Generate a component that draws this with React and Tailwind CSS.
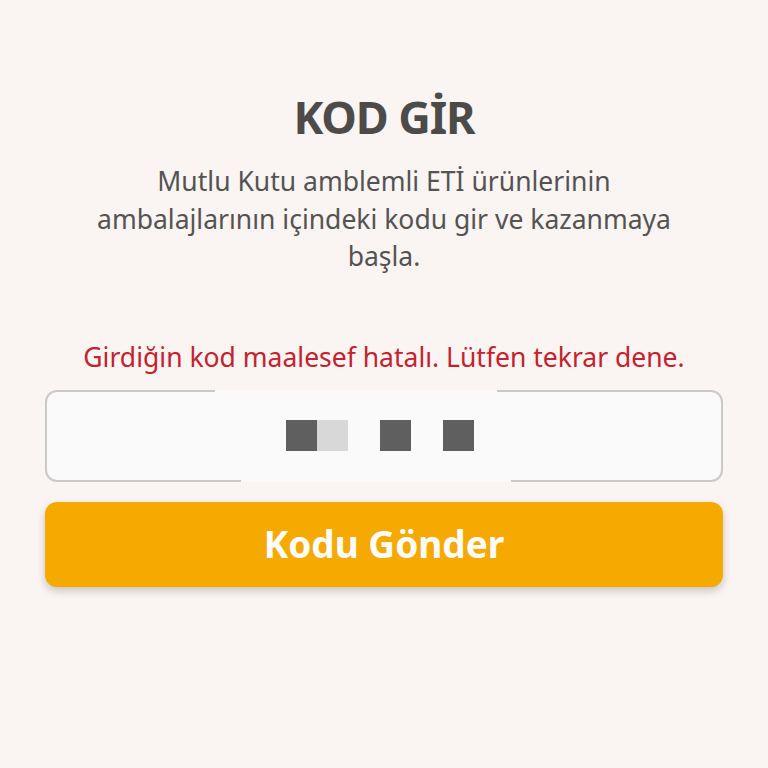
import React from "react";

export default function App() {
  return (
    <div
      className="min-h-[768px] w-full bg-[#faf5f2] px-[45px] pt-[89px] flex flex-col items-center"
      style={{ fontFamily: '"Noto Sans", "Open Sans", sans-serif' }}
    >
      <h1 className="text-[45px] leading-[56px] font-bold text-[#4d4b4a] tracking-tight">KOD GİR</h1>

      <p className="mt-[18px] text-center text-[26.5px] leading-[37.5px] text-[#555352] max-w-[620px]">
        Mutlu Kutu amblemli ETİ ürünlerinin ambalajlarının içindeki kodu gir ve kazanmaya başla.
      </p>

      <p className="mt-[64px] text-center text-[26.5px] leading-[34px] text-[#c4222f] whitespace-nowrap">
        Girdiğin kod maalesef hatalı. Lütfen tekrar dene.
      </p>

      {/* kod alanı */}
      <div className="relative mt-[16px] w-full h-[92px] rounded-[12px] border-2 border-[#cbc9c8] bg-[#fafafa] flex items-center justify-center">
        <div className="absolute top-[-2px] left-[168px] w-[282px] h-[3px] bg-[#fafafa]" />
        <div className="absolute bottom-[-2px] left-[194px] w-[270px] h-[3px] bg-[#fafafa]" />
        <div className="flex items-center gap-[32px] pr-[8px]">
          <div className="flex">
            <span className="w-[31px] h-[31px] bg-[#5f5f5f]" />
            <span className="w-[31px] h-[31px] bg-[#d8d8d8]" />
          </div>
          <span className="w-[31px] h-[31px] bg-[#5f5f5f]" />
          <span className="w-[31px] h-[31px] bg-[#5f5f5f]" />
        </div>
      </div>

      <button className="mt-[20px] w-full h-[85px] rounded-[12px] bg-[#f6a900] text-white text-[37px] font-bold shadow-[0_4px_8px_rgba(0,0,0,0.2)]">
        Kodu Gönder
      </button>
    </div>
  );
}
